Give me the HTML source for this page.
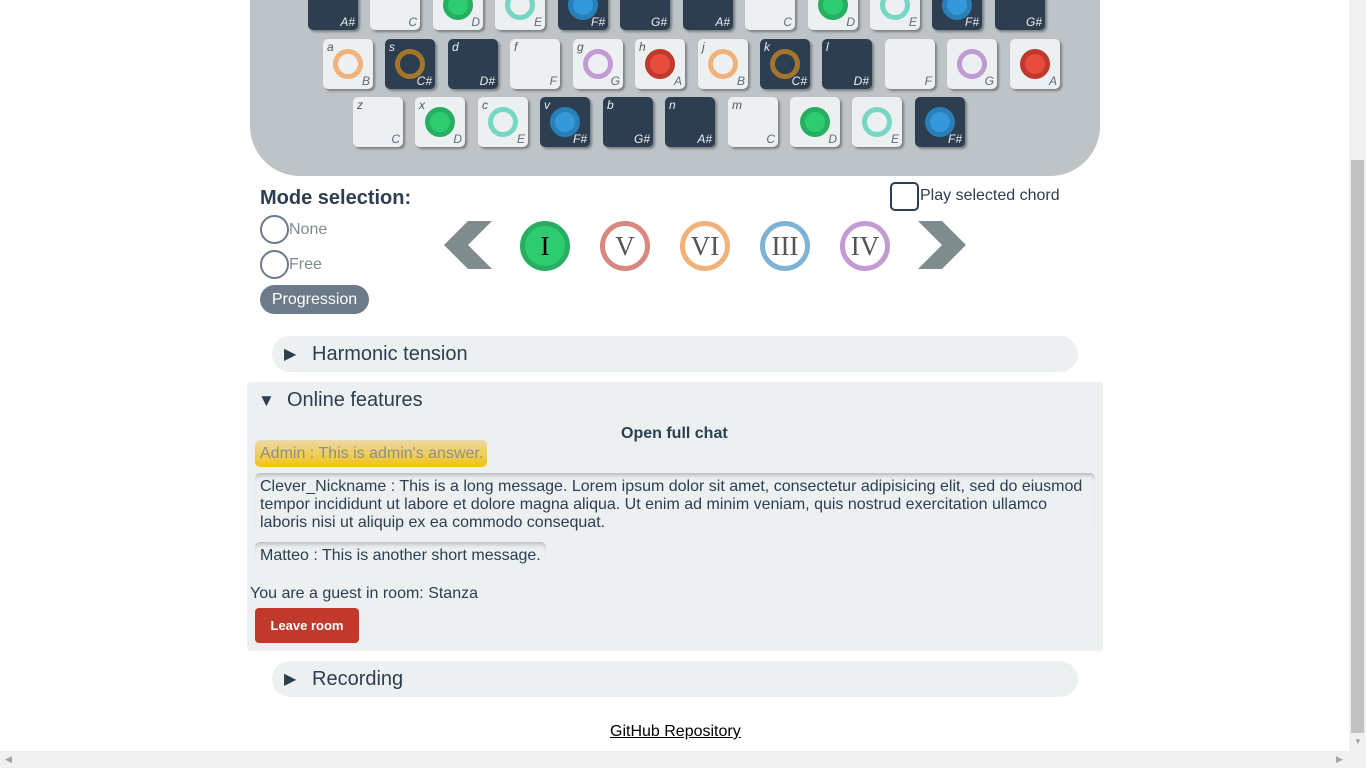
<!DOCTYPE html>
<html><head><meta charset="utf-8"><style>
*{box-sizing:border-box}
body{margin:0;width:1366px;height:768px;overflow:hidden;background:#fff;font-family:"Liberation Sans",sans-serif;color:#2c3e50;position:relative}
.panel{position:absolute;left:250px;top:-60px;width:850px;height:236px;background:#bdc3c7;border-radius:0 0 50px 50px}
.k{position:absolute;width:50px;height:50px;border-radius:5px;background:#ecf0f1;box-shadow:2px 2px 2px rgba(0,0,0,.35)}
.k.d{background:#2c3e50}
.k .l{position:absolute;left:4px;top:1px;font-size:12px;font-style:italic;color:#555}
.k .n{position:absolute;right:3px;bottom:1px;font-size:12px;font-style:italic;color:#5d6d7e}
.k.d .l,.k.d .n{color:#ecf0f1}
.c{position:absolute;left:10px;top:10px;width:30px;height:30px;border-radius:50%;border:5px solid}
.D{background:#2ecc71;border-color:#27ae60}.Fs{background:#3498db;border-color:#2980b9}.A{background:#e74c3c;border-color:#c0392b}
.E{border-color:#76d7c4}.B{border-color:#f0b27a}.Cs{border-color:#a5752c}.G{border-color:#c39bd3}
.ch{position:absolute;top:221px;width:50px;height:50px;border-radius:50%;border:5px solid;font-family:"Liberation Serif",serif;font-size:27px;text-align:center;line-height:41px;color:#555;background:#fff}
.radio{position:absolute;left:260px;width:29px;height:29px;border-radius:50%;border:2px solid #6c7a89}
.rl{position:absolute;left:289px;font-size:16px;color:#7f8c8d}
.acc{position:absolute;left:272px;width:806px;height:36px;background:#ecf0f1;border-radius:18px;font-size:20px}
.msg{position:absolute;left:255px;font-size:16px;line-height:18px;padding:3px 5px;border-radius:5px;box-shadow:inset 0 5px 5px -3px rgba(0,0,0,.25);white-space:nowrap}
</style></head><body>
<div class="panel"></div>
<!-- row1 -->
<div class="k d" style="left:308px;top:-20px"><span class="n">A#</span></div>
<div class="k" style="left:370px;top:-20px"><span class="n">C</span></div>
<div class="k" style="left:433px;top:-20px"><div class="c D"></div><span class="n">D</span></div>
<div class="k" style="left:495px;top:-20px"><div class="c E"></div><span class="n">E</span></div>
<div class="k d" style="left:558px;top:-20px"><div class="c Fs"></div><span class="n">F#</span></div>
<div class="k d" style="left:620px;top:-20px"><span class="n">G#</span></div>
<div class="k d" style="left:683px;top:-20px"><span class="n">A#</span></div>
<div class="k" style="left:745px;top:-20px"><span class="n">C</span></div>
<div class="k" style="left:808px;top:-20px"><div class="c D"></div><span class="n">D</span></div>
<div class="k" style="left:870px;top:-20px"><div class="c E"></div><span class="n">E</span></div>
<div class="k d" style="left:932px;top:-20px"><div class="c Fs"></div><span class="n">F#</span></div>
<div class="k d" style="left:995px;top:-20px"><span class="n">G#</span></div>
<!-- row2 -->
<div class="k" style="left:323px;top:39px"><span class="l">a</span><div class="c B"></div><span class="n">B</span></div>
<div class="k d" style="left:385px;top:39px"><span class="l">s</span><div class="c Cs"></div><span class="n">C#</span></div>
<div class="k d" style="left:448px;top:39px"><span class="l">d</span><span class="n">D#</span></div>
<div class="k" style="left:510px;top:39px"><span class="l">f</span><span class="n">F</span></div>
<div class="k" style="left:573px;top:39px"><span class="l">g</span><div class="c G"></div><span class="n">G</span></div>
<div class="k" style="left:635px;top:39px"><span class="l">h</span><div class="c A"></div><span class="n">A</span></div>
<div class="k" style="left:698px;top:39px"><span class="l">j</span><div class="c B"></div><span class="n">B</span></div>
<div class="k d" style="left:760px;top:39px"><span class="l">k</span><div class="c Cs"></div><span class="n">C#</span></div>
<div class="k d" style="left:822px;top:39px"><span class="l">l</span><span class="n">D#</span></div>
<div class="k" style="left:885px;top:39px"><span class="n">F</span></div>
<div class="k" style="left:947px;top:39px"><div class="c G"></div><span class="n">G</span></div>
<div class="k" style="left:1010px;top:39px"><div class="c A"></div><span class="n">A</span></div>
<!-- row3 -->
<div class="k" style="left:353px;top:97px"><span class="l">z</span><span class="n">C</span></div>
<div class="k" style="left:415px;top:97px"><span class="l">x</span><div class="c D"></div><span class="n">D</span></div>
<div class="k" style="left:478px;top:97px"><span class="l">c</span><div class="c E"></div><span class="n">E</span></div>
<div class="k d" style="left:540px;top:97px"><span class="l">v</span><div class="c Fs"></div><span class="n">F#</span></div>
<div class="k d" style="left:603px;top:97px"><span class="l">b</span><span class="n">G#</span></div>
<div class="k d" style="left:665px;top:97px"><span class="l">n</span><span class="n">A#</span></div>
<div class="k" style="left:728px;top:97px"><span class="l">m</span><span class="n">C</span></div>
<div class="k" style="left:790px;top:97px"><div class="c D"></div><span class="n">D</span></div>
<div class="k" style="left:852px;top:97px"><div class="c E"></div><span class="n">E</span></div>
<div class="k d" style="left:915px;top:97px"><div class="c Fs"></div><span class="n">F#</span></div>

<div style="position:absolute;left:260px;top:187px;font-size:20px;font-weight:bold">Mode selection:</div>
<div style="position:absolute;left:890px;top:182px;width:29px;height:29px;border:2px solid #2c3e50;border-radius:5px"></div>
<div style="position:absolute;left:920px;top:187px;font-size:16px">Play selected chord</div>
<div class="radio" style="top:215px"></div><div class="rl" style="top:221px">None</div>
<div class="radio" style="top:250px"></div><div class="rl" style="top:256px">Free</div>
<div style="position:absolute;left:260px;top:285px;width:109px;height:29px;border-radius:15px;background:#6c7a89;color:#fff;font-size:16px;text-align:center;line-height:29px">Progression</div>
<svg style="position:absolute;left:444px;top:221px" width="48" height="48"><polygon points="48,0 24,0 0,24 24,48 48,48 24,24" fill="#7f8c8d"/></svg>
<svg style="position:absolute;left:918px;top:221px" width="48" height="48"><polygon points="0,0 24,0 48,24 24,48 0,48 24,24" fill="#7f8c8d"/></svg>
<div class="ch" style="left:520px;background:#2ecc71;border-color:#27ae60;color:#000">I</div>
<div class="ch" style="left:600px;border-color:#d98880">V</div>
<div class="ch" style="left:680px;border-color:#f0b27a">VI</div>
<div class="ch" style="left:760px;border-color:#7fb3d5">III</div>
<div class="ch" style="left:840px;border-color:#c39bd3">IV</div>

<div class="acc" style="top:336px"><span style="position:absolute;left:12px;top:8px;font-size:16px">▶</span><span style="position:absolute;left:40px;top:7px">Harmonic tension</span></div>
<div style="position:absolute;left:247px;top:382px;width:856px;height:269px;background:#ecf0f1;border-radius:4px"></div>
<span style="position:absolute;left:258px;top:391px;font-size:17px">▼</span>
<span style="position:absolute;left:287px;top:389px;font-size:20px">Online features</span>
<div style="position:absolute;left:621px;top:425px;font-size:16px;font-weight:bold">Open full chat</div>
<div class="msg" style="top:440px;width:232px;height:27px;background:linear-gradient(#ecd9a8,#f1c40f);color:#8e8e8e;box-shadow:none;padding-top:5px">Admin : This is admin's answer.</div>
<div class="msg" style="top:473px;width:840px;height:60px;padding-top:5px;white-space:normal">Clever_Nickname : This is a long message. Lorem ipsum dolor sit amet, consectetur adipisicing elit, sed do eiusmod tempor incididunt ut labore et dolore magna aliqua. Ut enim ad minim veniam, quis nostrud exercitation ullamco laboris nisi ut aliquip ex ea commodo consequat.</div>
<div class="msg" style="top:542px;width:291px;height:25px;padding-top:5px">Matteo : This is another short message.</div>
<div style="position:absolute;left:250px;top:585px;font-size:16px">You are a guest in room: Stanza</div>
<div style="position:absolute;left:255px;top:608px;width:104px;height:35px;background:#c0392b;color:#fff;border-radius:4px;font-size:13px;font-weight:bold;text-align:center;line-height:35px">Leave room</div>
<div class="acc" style="top:661px"><span style="position:absolute;left:12px;top:8px;font-size:16px">▶</span><span style="position:absolute;left:40px;top:7px">Recording</span></div>
<div style="position:absolute;left:610px;top:723px;font-size:16px;color:#000;text-decoration:underline">GitHub Repository</div>

<div style="position:absolute;left:1349px;top:0;width:17px;height:768px;background:#f0f0f0"></div>
<div style="position:absolute;left:1351px;top:160px;width:13px;height:573px;background:#c1c1c1"></div>
<div style="position:absolute;left:0;top:751px;width:1349px;height:17px;background:#f0f0f0"></div>
<span style="position:absolute;left:1354px;top:737px;font-size:8px;color:#a3a3a3">▼</span>
<span style="position:absolute;left:5px;top:754px;font-size:9px;color:#a3a3a3">◀</span>
<span style="position:absolute;left:1336px;top:754px;font-size:9px;color:#a3a3a3">▶</span>
</body></html>
